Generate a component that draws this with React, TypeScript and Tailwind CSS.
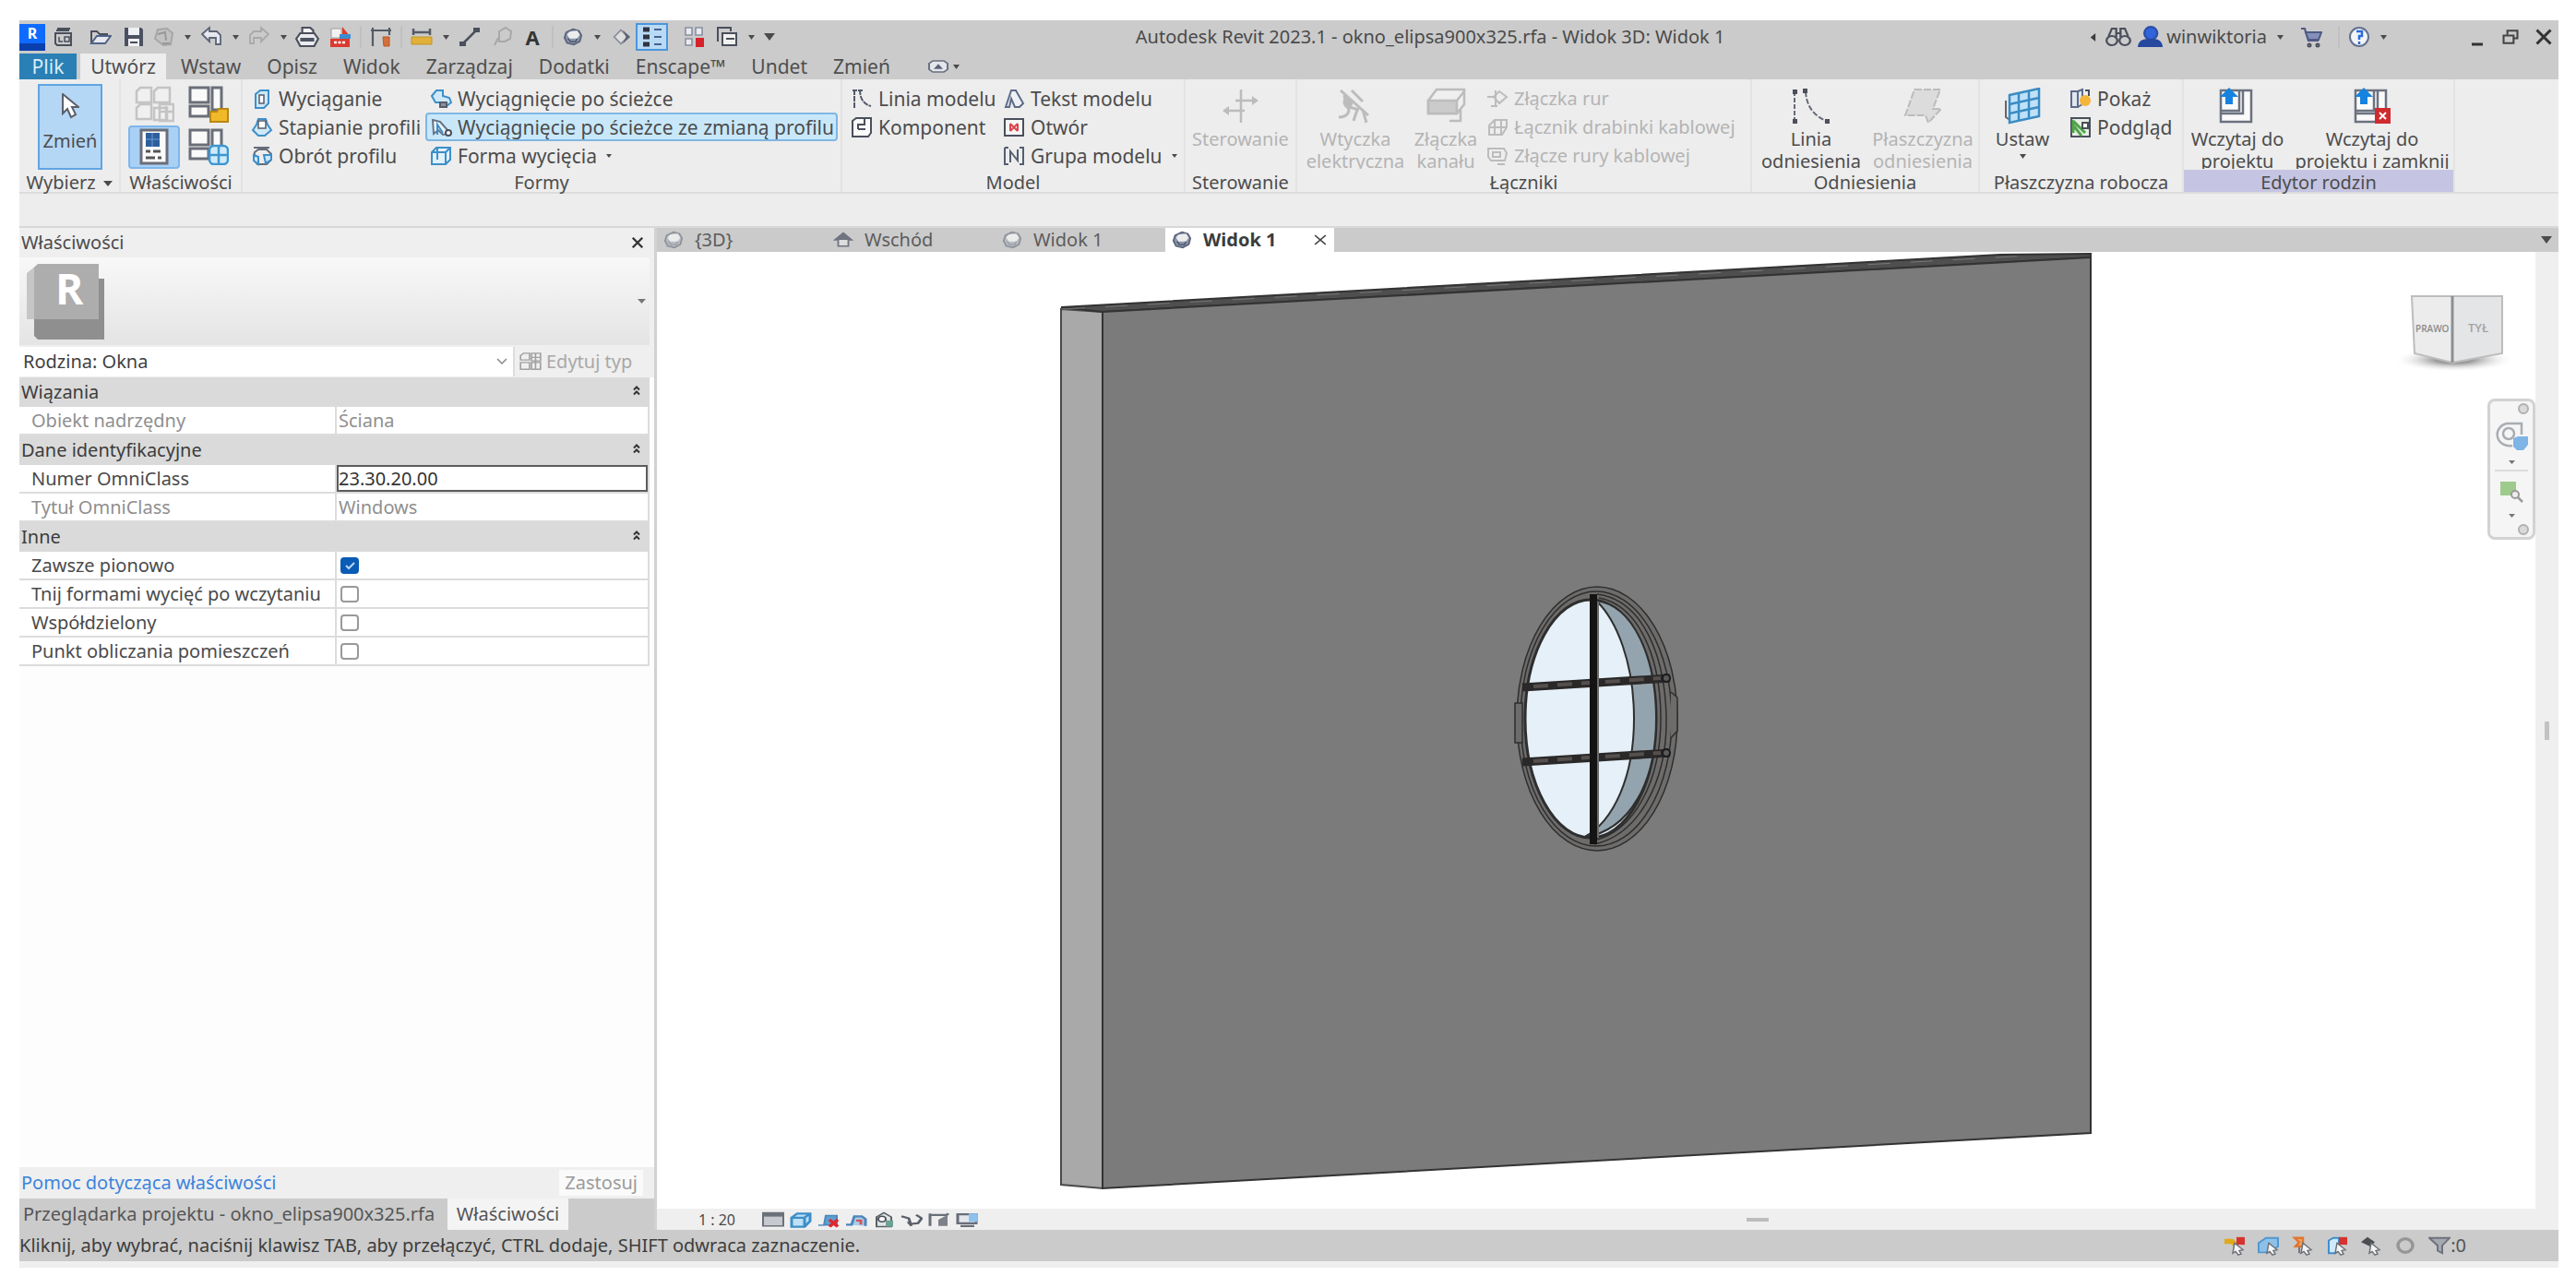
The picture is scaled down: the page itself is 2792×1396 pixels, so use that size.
import type { ReactNode } from "react";

type Kids = { children?: ReactNode };

function Ico({ children, size = "w-6 h-6" }: Kids & { size?: string }) {
  return (
    <svg viewBox="0 0 24 24" className={`${size} shrink-0`} fill="none" stroke="#4a4f5c" strokeWidth="2" preserveAspectRatio="none" aria-hidden="true">
      {children}
    </svg>
  );
}

function Caret({ className = "w-2 h-[5px]", color = "#4b4b4b" }: { className?: string; color?: string }) {
  return (
    <svg viewBox="0 0 10 6" className={`${className} shrink-0`} preserveAspectRatio="none" aria-hidden="true">
      <path d="M0 0h10L5 6z" fill={color} />
    </svg>
  );
}

/* ---------- title bar ---------- */

function QuickButton({ label, children, className = "" }: Kids & { label: string; className?: string }) {
  return (
    <button aria-label={label} className={`flex h-7 w-8 shrink-0 items-center justify-center ${className}`}>
      {children}
    </button>
  );
}

function DotButton({ label }: { label: string }) {
  return (
    <button aria-label={label} className="flex h-7 w-5 shrink-0 items-center justify-center">
      <Caret className="w-[7px] h-[5px]" />
    </button>
  );
}

function Separator() {
  return <div className="mx-[5px] h-6 w-[2px] bg-[#c0c0c0]" />;
}

function Sphere({ dim = false }: { dim?: boolean }) {
  return (
    <Ico size="w-[22px] h-5">
      <path d="M12 2l7 2 3 6-2 8-7 4-8-2-3-7 2-7z" fill={dim ? "#b9bcc2" : "#8b95ab"} stroke={dim ? "#8e929a" : "#5a647c"} />
      <path d="M8 5l9-1 3 5-3 5H8L5 9z" fill="#ececec" stroke="none" />
      <path d="M6 14l3 4h6l2-4" stroke={dim ? "#9a9da5" : "#4a5268"} strokeWidth="1.5" />
    </Ico>
  );
}

function TitleBar() {
  return (
    <header className="flex h-9 items-center bg-[#cbcbcb]">
      <button aria-label="Menu aplikacji" className="flex h-[29px] w-7 shrink-0 flex-col items-center border-b-8 border-[#0a3fae] bg-[#0f6bff] text-[16px] font-bold leading-5 text-white">
        R
      </button>
      <QuickButton label="Start" className="ml-1">
        <Ico>
          <path d="M4 5h14M5 3h14M3 8h17v13H5l-2-2z" />
          <path d="M7 12v5h4M13 12h5v5h-5z" strokeWidth="1.5" />
        </Ico>
      </QuickButton>
      <QuickButton label="Otwórz" className="ml-2">
        <Ico>
          <path d="M2 18V6h6l3 3h8v3" strokeWidth="2" />
          <path d="M2 19l6-8h15l-6 8z" fill="#e6e8ee" stroke="#4f6288" />
        </Ico>
      </QuickButton>
      <QuickButton label="Zapisz" className="ml-1">
        <Ico>
          <path d="M2 2h18l2 2v18H2z" fill="#4b5160" stroke="none" />
          <path d="M6 2h12v8H6zM6 14h12v8H6z" fill="#eef0f3" stroke="none" />
          <path d="M8 18h8" />
        </Ico>
      </QuickButton>
      <QuickButton label="Synchronizuj">
        <Ico>
          <path d="M6 4l10-1 6 5-2 12-8 1-9-7z" fill="#c2c2c2" stroke="#a6a6a6" />
          <path d="M6 9l8-2 1 9M11 19h8" stroke="#989898" />
        </Ico>
      </QuickButton>
      <DotButton label="Opcje synchronizacji" />
      <QuickButton label="Cofnij">
        <Ico>
          <path d="M2 9l8-7v4h8l4 4v10h-5v-7h-7v4z" fill="#e6e8ee" stroke="#5c6478" strokeWidth="1.8" />
        </Ico>
      </QuickButton>
      <DotButton label="Lista cofnięć" />
      <QuickButton label="Ponów">
        <Ico>
          <path d="M22 9l-8-7v4H6l-4 4v9h4v-6h8v4z" stroke="#a9a9a9" strokeWidth="1.8" />
        </Ico>
      </QuickButton>
      <DotButton label="Lista ponowień" />
      <QuickButton label="Drukuj">
        <Ico size="w-[26px] h-6">
          <path d="M7 9V2h8l3 3v4" fill="#f3f3f3" />
          <path d="M5 8h14l4 6-4 8H5l-4-8z" fill="#e9ebef" />
          <path d="M5 13h14v4H5z" fill="#4b5160" stroke="none" />
        </Ico>
      </QuickButton>
      <QuickButton label="Eksport PDF" className="ml-1">
        <Ico>
          <path d="M2 3h11v10H2z" fill="#f2f2f2" stroke="#9c9c9c" strokeWidth="1" />
          <path d="M14 1l8 10h-8z" fill="#e03a2c" stroke="none" />
          <path d="M11 9h12v5H11z" fill="#3b8ed0" stroke="none" />
          <path d="M1 14h21v9H1z" fill="#dc3a2d" stroke="none" />
          <path d="M5 18h12" stroke="#fff" strokeWidth="2.5" strokeDasharray="3 1.5" />
        </Ico>
      </QuickButton>
      <Separator />
      <QuickButton label="Wymiar wyrównany">
        <Ico>
          <path d="M3 2v20M3 5h18M21 2v8M1 5h5M18 5h5" stroke="#555b66" strokeWidth="2.2" />
          <path d="M14 12h7v10h-6z" fill="#d3703b" stroke="#b9572a" strokeWidth="1" />
        </Ico>
      </QuickButton>
      <Separator />
      <QuickButton label="Zmierz">
        <Ico>
          <path d="M1 12h22v8H1z" fill="#e0b03a" stroke="#c29526" strokeWidth="1" />
          <path d="M2 7h20M3 3v7M21 3v7" stroke="#555b66" strokeWidth="2.5" />
        </Ico>
      </QuickButton>
      <DotButton label="Opcje pomiaru" />
      <QuickButton label="Linia modelu">
        <Ico>
          <path d="M4 20L20 4" strokeWidth="2.5" />
          <path d="M1 17h7v5H1zM16 2h7v5h-7z" fill="#4a4f5c" stroke="none" />
        </Ico>
      </QuickButton>
      <QuickButton label="Etykieta" className="ml-1">
        <Ico>
          <path d="M3 21l4-8M8 6l7-4 6 4-1 8-6 3H8z" stroke="#a8a8a8" />
        </Ico>
      </QuickButton>
      <QuickButton label="Tekst">
        <span className="text-[22px] font-bold leading-7 text-[#353535]">A</span>
      </QuickButton>
      <Separator />
      <QuickButton label="Widok 3D">
        <Sphere />
      </QuickButton>
      <DotButton label="Opcje widoku 3D" />
      <QuickButton label="Przekrój">
        <Ico size="w-[22px] h-5">
          <path d="M12 3l8 9-8 9-8-9z" fill="#dedede" stroke="#8a8f9c" />
          <path d="M14 3l9 9-9 9 4-9z" fill="#5d6372" stroke="none" />
        </Ico>
      </QuickButton>
      <button aria-label="Cienkie linie" className="flex h-[30px] w-[35px] shrink-0 items-center justify-center border-2 border-[#4a96dc] bg-[#b9daf5]">
        <Ico>
          <path d="M2 4h7M2 12h7M2 20h7" stroke="#2f3440" strokeWidth="5" />
          <path d="M14 4h8M14 12h8M14 20h8" stroke="#45618c" strokeWidth="1.8" />
        </Ico>
      </button>
      <QuickButton label="Zamknij nieaktywne" className="ml-3">
        <Ico>
          <path d="M3 2h7v8H3zM3 14h7v7H3zM14 2h7v8h-7z" fill="#e9ebf0" stroke="#8a90a0" strokeWidth="1.6" />
          <path d="M14 13h9v10h-9z" fill="#d6222a" stroke="none" />
        </Ico>
      </QuickButton>
      <QuickButton label="Przełącz okna" className="ml-1">
        <Ico>
          <path d="M2 17V2h14v4" />
          <path d="M7 8h15v13H7z" fill="#f1f1f1" />
          <path d="M11 14h9" />
        </Ico>
      </QuickButton>
      <DotButton label="Lista okien" />
      <button aria-label="Dostosuj pasek" className="flex h-7 w-5 shrink-0 items-center justify-center">
        <Caret className="w-3 h-2" />
      </button>
      <h1 className="min-w-0 flex-1 whitespace-nowrap text-center text-[20px] text-[#4a4a4a]">Autodesk Revit 2023.1 - okno_elipsa900x325.rfa - Widok 3D: Widok 1</h1>
      <button aria-label="Zwiń wyszukiwanie" className="flex h-7 w-6 items-center justify-center">
        <svg viewBox="0 0 6 10" className="h-[9px] w-[7px]" aria-hidden="true"><path d="M6 0v10L0 5z" fill="#3c3c3c" /></svg>
      </button>
      <QuickButton label="Szukaj" className="mr-1">
        <Ico size="w-7 h-6">
          <circle cx="6" cy="16" r="5" /><circle cx="18" cy="16" r="5" />
          <path d="M3 11l3-8h4v9M21 11l-3-8h-4v9M10 8h4" />
        </Ico>
      </QuickButton>
      <button className="flex h-7 items-center gap-1 whitespace-nowrap text-[20px] text-[#4a4a4a]">
        <Ico size="w-7 h-6">
          <ellipse cx="13" cy="8" rx="6" ry="7" fill="#3164d8" stroke="#2b4da8" />
          <path d="M2 22c1-6 5-7 11-7s9 1 10 7z" fill="#26499f" stroke="#26499f" />
        </Ico>
        winwiktoria
      </button>
      <span className="ml-1 flex"><DotButton label="Opcje konta" /></span>
      <QuickButton label="Sklep" className="ml-2 mr-2">
        <Ico>
          <path d="M1 3h4l4 13h11" strokeWidth="2.2" stroke="#4f5a86" />
          <path d="M6 7h17l-3 8H9z" fill="#8490ba" stroke="#4f5a86" />
          <circle cx="10" cy="21" r="1.5" /><circle cx="19" cy="21" r="1.5" />
        </Ico>
      </QuickButton>
      <Separator />
      <QuickButton label="Pomoc">
        <Ico>
          <circle cx="12" cy="12" r="10" fill="#f2f4f8" stroke="#64718f" />
          <path d="M9 6h6v5h-3v4M12 17v3" stroke="#2a6be0" strokeWidth="2.5" />
        </Ico>
      </QuickButton>
      <DotButton label="Opcje pomocy" />
      <div className="ml-[76px] flex gap-1">
        <QuickButton label="Minimalizuj">
          <Ico size="w-3 h-6"><path d="M0 20h24" stroke="#333" strokeWidth="3" /></Ico>
        </QuickButton>
        <QuickButton label="Przywróć">
          <Ico size="w-5 h-[18px]">
            <path d="M8 9V3h13v11h-5" stroke="#444" strokeWidth="2.5" /><path d="M3 10h13v11H3z" stroke="#444" strokeWidth="2.5" />
          </Ico>
        </QuickButton>
        <QuickButton label="Zamknij">
          <Ico size="w-5 h-[18px]"><path d="M3 2l18 20M21 2L3 22" stroke="#333" strokeWidth="3.5" /></Ico>
        </QuickButton>
      </div>
    </header>
  );
}

const ribbonTabs = ["Wstaw", "Opisz", "Widok", "Zarządzaj", "Dodatki", "Enscape™", "Undet", "Zmień"];

function RibbonTabs() {
  return (
    <nav className="flex h-7 items-stretch bg-[#cbcbcb] text-[21px] leading-7 text-[#4f4f4f]">
      <button className="w-[62px] bg-[#2a80b4] text-[#d9ecf8]">Plik</button>
      <button className="ml-1 w-[93px] bg-[#ededed]">Utwórz</button>
      <div className="flex gap-7 pl-4">
        {ribbonTabs.map((t) => (
          <button key={t}>{t}</button>
        ))}
      </div>
      <button aria-label="Minimalizuj wstążkę" className="ml-10 flex items-center gap-1">
        <Ico size="w-6 h-4">
          <path d="M6 3h12l4 4v10l-4 4H6l-4-4V7z" fill="#e4e6ea" stroke="#687080" />
          <path d="M12 8l5 8H7z" fill="#5a6278" stroke="none" />
        </Ico>
        <Caret className="w-[7px] h-[5px]" />
      </button>
    </nav>
  );
}

/* ---------- ribbon ---------- */

function Group({ label, width, children, labelClass = "", trailing }: Kids & { label: string; width: string; labelClass?: string; trailing?: ReactNode }) {
  return (
    <section aria-label={label} className={`${width} flex shrink-0 flex-col border-r-2 border-[#e3e3e3]`}>
      <div className="flex h-[98px] pt-[5px]">{children}</div>
      <div className={`flex h-6 justify-center gap-2 whitespace-nowrap pt-1 leading-5 ${labelClass}`}>
        {label}
        {trailing}
      </div>
    </section>
  );
}

function Small({ icon, children, active = false, dim = false, caret = false }: Kids & { icon: ReactNode; active?: boolean; dim?: boolean; caret?: boolean }) {
  return (
    <button
      className={`flex h-[31px] items-center gap-[6px] whitespace-nowrap border-2 pl-[3px] pr-[2px] leading-[26px] ${
        active ? "rounded-sm border-[#7fb6e2] bg-[#c8e8fa]" : "border-transparent"
      } ${dim ? "text-[20px] text-[#b4b4b4]" : "text-[21px]"}`}
    >
      {icon}
      {children}
      {caret && <Caret className="ml-1 w-[6px] h-1" />}
    </button>
  );
}

function Big({ icon, lines, width, dim = false, caret = false }: { icon: ReactNode; lines: string[]; width: string; dim?: boolean; caret?: boolean }) {
  return (
    <button className={`${width} flex h-[92px] shrink-0 flex-col items-center overflow-hidden whitespace-nowrap pt-1 ${dim ? "text-[#b4b4b4]" : ""}`}>
      <span className="mb-1 flex h-10 items-center">{icon}</span>
      {lines.map((l) => (
        <span key={l} className="block h-6 shrink-0 leading-6">{l}</span>
      ))}
      {caret && <Caret className="mt-1 w-[7px] h-[5px]" />}
    </button>
  );
}

const blue = "#3d8fc9";
const dimStroke = "#bcbcbc";

function DimConnector({ kind }: { kind: number }) {
  return (
    <Ico>
      {kind === 0 && <path d="M1 10h7M8 10l6-6 8 6-8 7zM10 3v17M5 20h7" stroke={dimStroke} />}
      {kind === 1 && <path d="M3 10l6-6h13v8l-5 8H3zM9 4v15M16 4v16M3 12h18" stroke={dimStroke} />}
      {kind === 2 && <path d="M2 4h17l3 5-2 8H5l-3-4zM7 8h8v5H7zM12 21h8" stroke={dimStroke} />}
    </Ico>
  );
}

function LoadIcon({ close = false }: { close?: boolean }) {
  return (
    <svg viewBox="0 0 44 40" className="h-10 w-11" fill="none" aria-hidden="true">
      <path d="M4 3h33v34H4z" fill="#fafafa" stroke="#6b7280" strokeWidth="2.5" />
      <path d="M4 25h20V3M4 28h24V3" stroke="#6b7280" strokeWidth="2.5" />
      <path d="M13 0l10 10h-6v8H9v-8H3z" fill="#1683e0" />
      {close && (
        <>
          <path d="M25 22h17v17H25z" fill="#cf2b2f" />
          <path d="M30 27l7 7M37 27l-7 7" stroke="#fff" strokeWidth="2" />
        </>
      )}
    </svg>
  );
}

function WindowTiles({ badge }: { badge: "folder" | "grid" }) {
  return (
    <svg viewBox="0 0 44 40" className="h-10 w-11" fill="none" aria-hidden="true">
      <path d="M2 2h20v16H2zM2 22h20v11H2zM26 2h10v24H26z" fill="#fafafa" stroke="#6a6e78" strokeWidth="3" />
      {badge === "folder" ? (
        <path d="M24 28h7l2-3h10v14H24z" fill="#f0b929" stroke="#b98814" strokeWidth="2" />
      ) : (
        <>
          <rect x="23" y="19" width="20" height="20" rx="5" fill="#cfeafa" stroke="#3d96d0" strokeWidth="2.5" />
          <path d="M33 20v18M24 29h18" stroke="#3d96d0" strokeWidth="2.5" />
        </>
      )}
    </svg>
  );
}

function Ribbon() {
  return (
    <div className="flex h-[124px] border-b-2 border-[#dcdcdc] bg-[#ededed] text-[20px] text-[#4c4c4c]">
      <Group label="Wybierz" width="w-[110px]" trailing={<Caret className="mt-2 w-[10px] h-[6px]" />}>
        <button className="ml-5 flex h-[93px] w-[70px] flex-col items-center gap-3 border-2 border-[#5fa5e3] bg-[#b5d7f6] pt-2 leading-6">
          <svg viewBox="0 0 20 28" className="h-7 w-5 shrink-0" aria-hidden="true">
            <path d="M2 1v21l5-5 4 9 5-3-4-8h7z" fill="#fff" stroke="#5b5f68" strokeWidth="2" />
          </svg>
          Zmień
        </button>
      </Group>
      <Group label="Właściwości" width="w-[132px]">
        <div className="grid w-full grid-cols-2 grid-rows-[44px_48px] place-items-center gap-x-1 pl-2 pr-2">
          <button aria-label="Typy rodziny">
            <svg viewBox="0 0 44 40" className="h-10 w-11" fill="none" stroke="#c4c4c4" strokeWidth="2.5" aria-hidden="true">
              <path d="M3 6l4-4h12v16H3zM22 6l4-4h13v16H22zM3 24l4-4h12v16H3zM22 24h14v13H22z" fill="#f0f0f0" />
              <path d="M28 20h15v18H28zM28 28h15M35 22v15" />
            </svg>
          </button>
          <button aria-label="Kategoria i parametry rodziny"><WindowTiles badge="folder" /></button>
          <button aria-label="Właściwości" className="flex h-[47px] w-14 items-center justify-center rounded border-2 border-[#7fb6ea] bg-[#a9d0f5]">
            <svg viewBox="0 0 32 40" className="h-10 w-8" fill="none" aria-hidden="true">
              <rect x="2" y="2" width="28" height="36" fill="#fafafa" stroke="#6a6e78" strokeWidth="3" />
              <path d="M7 5h15v15H7z" fill="#2d5f9e" />
              <path d="M14 5v15M7 12h15" stroke="#6f9bd0" />
              <path d="M7 25h5M15 25h8M7 32h10M20 32h4" stroke="#555" strokeWidth="3" />
            </svg>
          </button>
          <button aria-label="Typy"><WindowTiles badge="grid" /></button>
        </div>
      </Group>
      <Group label="Formy" width="w-[650px]">
        <div className="flex w-[190px] shrink-0 flex-col items-start pl-1">
          <Small icon={<Ico><path d="M5 7l5-4h9v14l-5 5H5z" fill="#cfe8f8" stroke={blue} /><path d="M9 8h5v9H9z" fill="#fff" stroke="#555d6c" strokeWidth="1.5" /></Ico>}>Wyciąganie</Small>
          <Small icon={<Ico><path d="M8 3h8l2 6 4 6-7 6H8l-6-6 4-6z" fill="#cfe8f8" stroke={blue} /><path d="M8 5h8v8H8z" fill="#fff" stroke="#555d6c" strokeWidth="1.5" /></Ico>}>Stapianie profili</Small>
          <Small icon={<Ico><path d="M3 3h17M4 8l4-3h9l5 5v6l-5 5H7l-4-5z" stroke="#666d7a" /><path d="M3 11l5 2v8l-5-4zM14 11h8v5l-6 4z" fill="#cfe8f8" stroke={blue} /></Ico>}>Obrót profilu</Small>
        </div>
        <div className="flex flex-col items-start pl-2">
          <Small icon={<Ico><path d="M2 9l5-6h7v6l7 2 2 5-5 4-7-4H6z" fill="#cfe8f8" stroke={blue} /><path d="M11 16h7v5h-7z" fill="#8a92a0" stroke="#555d6c" /></Ico>}>Wyciągnięcie po ścieżce</Small>
          <Small active icon={<Ico><path d="M3 4l8 2 8 9v4l-5 1-5-5-5 4z" fill="#e9f6fd" stroke="#6a7586" /><path d="M8 20V9l6 9" stroke={blue} /><circle cx="20" cy="18" r="3" fill="#fff" /></Ico>}>Wyciągnięcie po ścieżce ze zmianą profilu</Small>
          <Small caret icon={<Ico><path d="M2 8l5-5h15v13l-5 5H2z" fill="#dff1fb" stroke={blue} /><path d="M2 8h15v13M17 8l5-5M8 3v13" stroke={blue} /></Ico>}>Forma wycięcia</Small>
        </div>
      </Group>
      <Group label="Model" width="w-[372px]">
        <div className="flex w-[165px] shrink-0 flex-col items-start pl-1">
          <Small icon={<Ico><path d="M4 2v20M10 2c0 10 4 16 12 18M2 3h5M8 3h5" stroke="#525a6a" strokeDasharray="6 1" /></Ico>}>Linia modelu</Small>
          <Small icon={<Ico><path d="M2 5l4-3h16v16l-3 4H2z" fill="#fafafa" /><path d="M8 14V9h7V2M8 14h8" /></Ico>}>Komponent</Small>
        </div>
        <div className="flex flex-col items-start pl-1">
          <Small icon={<Ico><path d="M3 21L9 3h5l8 14-4 4h-5L9 12l-2 9z" fill="#eef0f4" stroke="#5d6b88" /></Ico>}>Tekst modelu</Small>
          <Small icon={<Ico><path d="M2 3h20v18H2z" fill="#f6f6f6" /><path d="M8 8l8 8M16 8l-8 8M8 8v8M16 8v8" stroke="#d9464b" /></Ico>}>Otwór</Small>
          <Small caret icon={<Ico><path d="M2 3h4M2 3v18h4M18 3h4v18h-4M8 19V7l8 10V5" stroke="#555d70" /></Ico>}>Grupa modelu</Small>
        </div>
      </Group>
      <Group label="Sterowanie" width="w-[121px]">
        <Big dim width="w-full" lines={["Sterowanie"]} icon={<svg viewBox="0 0 40 40" className="h-10 w-10" fill="none" stroke={dimStroke} strokeWidth="2.5" aria-hidden="true"><path d="M20 2v36M14 14h20M4 25h20" /><path d="M32 9l7 5-7 5zM7 20l-7 5 7 5z" fill={dimStroke} stroke="none" /></svg>} />
      </Group>
      <Group label="Łączniki" width="w-[493px]">
        <Big dim width="w-[126px]" lines={["Wtyczka", "elektryczna"]} icon={<svg viewBox="0 0 44 40" className="h-10 w-11" fill="none" stroke={dimStroke} strokeWidth="3" aria-hidden="true"><path d="M6 3l30 27M18 3l12 12M10 8l2 12 14 4M12 20c6 4 2 12-8 12M24 24l-4 12M30 24l4 14" /><circle cx="14" cy="16" r="4" fill={dimStroke} /></svg>} />
        <Big dim width="w-[70px]" lines={["Złączka", "kanału"]} icon={<svg viewBox="0 0 44 40" className="h-10 w-11" fill="none" stroke={dimStroke} strokeWidth="2.5" aria-hidden="true"><path d="M3 14L12 2h30v16L34 28H3z" fill="#efefef" /><path d="M3 14h31v14H3z" fill="#cbcbcb" /><path d="M34 14l8-10M38 24v12H26" /></svg>} />
        <div className="flex flex-col items-start pl-1">
          <Small dim icon={<DimConnector kind={0} />}>Złączka rur</Small>
          <Small dim icon={<DimConnector kind={1} />}>Łącznik drabinki kablowej</Small>
          <Small dim icon={<DimConnector kind={2} />}>Złącze rury kablowej</Small>
        </div>
      </Group>
      <Group label="Odniesienia" width="w-[247px]">
        <Big width="w-[128px]" lines={["Linia", "odniesienia"]} icon={<svg viewBox="0 0 44 40" className="h-10 w-11" fill="none" stroke="#666b75" strokeWidth="2" aria-hidden="true"><path d="M4 4v32" strokeDasharray="5 2" /><path d="M16 4c1 16 8 26 24 33" strokeDasharray="6 2" /><path d="M2 2h5v5H2zM2 34h5v5H2zM13 1h5v5h-5zM37 34h5v5h-5z" fill="#4c505a" stroke="none" /></svg>} />
        <Big dim width="w-[114px]" lines={["Płaszczyzna", "odniesienia"]} icon={<svg viewBox="0 0 44 40" className="h-10 w-11" fill="none" stroke={dimStroke} strokeWidth="2" aria-hidden="true"><path d="M13 2h28l-8 21 9 0-14 15-3-8H3z" fill="#dcdcdc" strokeDasharray="8 2" /></svg>} />
      </Group>
      <Group label="Płaszczyzna robocza" width="w-[221px]">
        <Big caret width="w-[92px]" lines={["Ustaw"]} icon={<svg viewBox="0 0 40 40" className="h-10 w-10" fill="none" aria-hidden="true"><path d="M2 14v18l6 4" stroke="#666" strokeWidth="2" /><path d="M6 8l32-7v30L6 38z" fill="#bfe2f8" stroke="#3a8cc4" strokeWidth="2.5" /><path d="M16 6v30M27 4v30M6 18l32-7M6 28l32-7" stroke="#3a8cc4" strokeWidth="2.5" /></svg>} />
        <div className="flex flex-col items-start">
          <Small icon={<Ico><path d="M2 4h7v17H2zM9 4l5-2v16l-5 3" fill="#dfe7f0" stroke="#5d6b88" /><path d="M17 3h4v6" /><circle cx="17" cy="14" r="6" fill="#f4b53a" stroke="none" /></Ico>}>Pokaż</Small>
          <Small icon={<Ico><path d="M2 2h20v20H2z" fill="#e9efe6" /><path d="M4 5l13 13M5 11l8 10M4 18V6l9 8" stroke="#4fa548" strokeWidth="3" /><path d="M14 7h6v6h-6z" fill="#fff" /></Ico>}>Podgląd</Small>
        </div>
      </Group>
      <Group label="Edytor rodzin" width="w-[294px]" labelClass="bg-[#c5c5e3]">
        <Big width="w-[116px]" lines={["Wczytaj do", "projektu"]} icon={<LoadIcon />} />
        <Big width="w-[176px]" lines={["Wczytaj do", "projektu i zamknij"]} icon={<LoadIcon close />} />
      </Group>
    </div>
  );
}

/* ---------- properties palette ---------- */

function GroupRow({ children }: Kids) {
  return (
    <tr className="h-8 bg-[#dadada]">
      <th colSpan={2} scope="colgroup" className="p-0 text-left font-normal">
        <button className="flex w-full items-center justify-between pl-[2px] pr-[10px] text-[#3c3c3c]">
          {children}
          <svg viewBox="0 0 8 10" className="-mt-1 h-[11px] w-2" fill="none" stroke="#333" strokeWidth="2" aria-hidden="true">
            <path d="M1 4l3-3 3 3M1 9l3-3 3 3" />
          </svg>
        </button>
      </th>
    </tr>
  );
}

function PropRow({ id, name, dim = false, children }: Kids & { id: string; name: string; dim?: boolean }) {
  return (
    <tr className={`h-[31px] ${dim ? "text-[#8f8f8f]" : "text-[#4a4a4a]"}`}>
      <th scope="row" className="whitespace-nowrap border-b-2 border-r-2 border-[#dcdcdc] py-0 pl-[13px] pr-0 text-left font-normal">
        <label htmlFor={id}>{name}</label>
      </th>
      <td className="border-b-2 border-r-2 border-[#dcdcdc] p-0">{children}</td>
    </tr>
  );
}

function Check({ id, checked = false }: { id: string; checked?: boolean }) {
  return (
    <span className="relative ml-1 flex w-5 items-center">
      <input id={id} type="checkbox" defaultChecked={checked} className="peer h-[18px] w-5 appearance-none rounded border-2 border-[#999] bg-white checked:border-[#0a5bb5] checked:bg-[#0a5bb5]" />
      <svg viewBox="0 0 20 18" className="pointer-events-none absolute inset-0 hidden h-[18px] w-5 peer-checked:block" fill="none" aria-hidden="true">
        <path d="M6 9l3 3 6-6" stroke="#b9d6f2" strokeWidth="2" />
      </svg>
    </span>
  );
}

function Properties() {
  return (
    <aside className="flex w-[691px] shrink-0 flex-col border-r-[3px] border-[#d2d2d2] bg-[#efefef] text-[20px]">
      <div className="flex h-8 items-center justify-between pl-[2px] pr-[11px] text-[#4c4c4c]">
        <h2>Właściwości</h2>
        <button aria-label="Zamknij paletę">
          <Ico size="w-[14px] h-[14px]"><path d="M3 3l18 18M21 3L3 21" stroke="#333" strokeWidth="4" /></Ico>
        </button>
      </div>
      <button aria-label="Selektor typu" className="mr-[5px] flex h-[95px] items-center justify-between bg-gradient-to-b from-[#f8f8f8] to-[#e4e4e4] pl-2 pr-1">
        <svg viewBox="0 0 88 86" className="h-[86px] w-[88px]" aria-hidden="true">
          <path d="M0 12L10 4v58H0z" fill="#c6c6c6" />
          <path d="M8 60h70V18h6v66H12l-4-4z" fill="#8f8f8f" />
          <path d="M12 2h66v60H8V6z" fill="#adadad" />
          <text x="31" y="46" fontFamily="Open Sans" fontWeight="700" fontSize="46" fill="#fff">R</text>
        </svg>
        <Caret className="w-[9px] h-[5px]" color="#777" />
      </button>
      <div className="mr-[5px] flex h-[35px] items-center gap-1">
        <div className="relative w-[537px] shrink-0">
          <select aria-label="Filtr właściwości" className="block h-8 w-full appearance-none border-r-2 border-[#dcdcdc] bg-white pl-1 text-[#3f3f3f]">
            <option>Rodzina: Okna</option>
          </select>
          <svg viewBox="0 0 12 8" className="pointer-events-none absolute right-2 top-3 h-2 w-3" fill="none" aria-hidden="true"><path d="M1 1l5 5 5-5" stroke="#888" strokeWidth="1.5" /></svg>
        </div>
        <button className="flex items-center gap-1 whitespace-nowrap text-[#a8a8a8]">
          <Ico size="w-[26px] h-[22px]"><path d="M2 5l3-3h6v8H2zM13 2h9v9h-9zM2 13h9v8H2zM13 13h9v8h-9zM17 2v19M13 7h9" stroke="#a0a0a0" strokeWidth="1.5" /></Ico>
          Edytuj typ
        </button>
      </div>
      <div className="flex-1 bg-[#fdfdfd] pr-[5px]">
        <table className="w-full table-fixed border-separate border-spacing-0 bg-white leading-6">
          <colgroup>
            <col className="w-[344px]" />
            <col />
          </colgroup>
          <tbody>
            <GroupRow>Wiązania</GroupRow>
            <PropRow id="host" name="Obiekt nadrzędny" dim>
              <input id="host" readOnly value="Ściana" className="block h-6 w-full bg-transparent pl-[2px]" />
            </PropRow>
            <GroupRow>Dane identyfikacyjne</GroupRow>
            <PropRow id="omni" name="Numer OmniClass">
              <input id="omni" defaultValue="23.30.20.00" className="block h-[29px] w-full border-2 border-[#5c5c5c] bg-transparent text-[#333]" />
            </PropRow>
            <PropRow id="omnititle" name="Tytuł OmniClass" dim>
              <input id="omnititle" readOnly value="Windows" className="block h-6 w-full bg-transparent pl-[2px]" />
            </PropRow>
            <GroupRow>Inne</GroupRow>
            <PropRow id="vert" name="Zawsze pionowo"><Check id="vert" checked /></PropRow>
            <PropRow id="cut" name="Tnij formami wycięć po wczytaniu"><Check id="cut" /></PropRow>
            <PropRow id="shared" name="Współdzielony"><Check id="shared" /></PropRow>
            <PropRow id="room" name="Punkt obliczania pomieszczeń"><Check id="room" /></PropRow>
          </tbody>
        </table>
      </div>
      <div className="flex h-[34px] items-center justify-between pl-[2px] pr-3">
        <a href="#pomoc" className="text-[#3a84dc]">Pomoc dotycząca właściwości</a>
        <button className="h-7 bg-[#fafafa] px-[6px] leading-7 text-[#9b9b9b]">Zastosuj</button>
      </div>
      <div className="flex h-[34px] bg-[#cbcbcb] text-[#565656]">
        <button className="w-[464px] whitespace-nowrap pl-1 text-left">Przeglądarka projektu - okno_elipsa900x325.rfa</button>
        <button className="w-[131px] bg-[#f4f4f4]">Właściwości</button>
      </div>
    </aside>
  );
}

/* ---------- view area ---------- */

function HomeIcon() {
  return (
    <Ico size="w-[22px] h-[18px]">
      <path d="M12 2l10 10h-4v9H6v-9H2z" fill="#dcdcdc" stroke="#6f7480" />
      <path d="M12 2l10 10H2z" fill="#6f7480" stroke="none" />
    </Ico>
  );
}

function ViewTabs() {
  return (
    <div className="flex h-[26px] items-stretch bg-[#cbcbcb] text-[20px] leading-[26px] text-[#5c5c5c]">
      <button className="flex w-[184px] items-center gap-3 pl-[7px]"><Sphere dim />{"{3D}"}</button>
      <button className="flex w-[183px] items-center gap-3 pl-[7px]"><HomeIcon />Wschód</button>
      <button className="flex w-[184px] items-center gap-3 pl-[7px]"><Sphere dim />Widok 1</button>
      <div className="flex w-[183px] items-center justify-between bg-white pl-[7px] pr-2">
        <button className="flex items-center gap-3 whitespace-nowrap font-bold text-[#3c3c3c]"><Sphere />Widok 1</button>
        <button aria-label="Zamknij widok">
          <Ico size="w-[14px] h-3"><path d="M2 2l20 20M22 2L2 22" stroke="#444" strokeWidth="3" /></Ico>
        </button>
      </div>
      <button aria-label="Lista widoków" className="ml-auto flex w-[26px] items-center justify-center"><Caret className="w-3 h-2" /></button>
    </div>
  );
}

function Scene() {
  return (
    <svg viewBox="712 273 2036 1037" className="block h-auto w-full" fill="none" role="img" aria-label="Model ściany z owalnym oknem">
      <path d="M1150 335L1195 338V1288L1150 1284z" fill="#a9a9a9" stroke="#4a4a4a" strokeWidth="2" />
      <path d="M1150 333L2168 276L2266 275V279L1195 338z" fill="#4f4f4f" stroke="#333" strokeWidth="2" />
      <path d="M1195 338L2266 279V1228L1195 1288z" fill="#7b7b7b" stroke="#333" strokeWidth="2" />
      <path d="M1152 335L2200 277" stroke="#767676" strokeWidth="1" strokeDasharray="24 22" />
      <g stroke="#2e2e2e">
        <ellipse cx="1731" cy="779" rx="87" ry="143" fill="#6e6c6b" strokeWidth="1.5" />
        <ellipse cx="1730" cy="779" rx="82" ry="138" strokeWidth="1.5" />
        <path d="M1731 644C1780 650 1805 710 1806 779S1775 905 1728 915" strokeWidth="1.5" />
        <path d="M1733 648C1776 656 1800 712 1800 779S1772 900 1728 911" strokeWidth="1.5" />
        <rect x="1642" y="762" width="8" height="43" fill="#6e6c6b" strokeWidth="1.5" />
        <path d="M1811 750l7 6v36l-7 8" fill="#6e6c6b" strokeWidth="1.5" />
        <ellipse cx="1724" cy="779" rx="71" ry="129" fill="#e5f0f8" strokeWidth="3" />
        <path d="M1730 651C1770 656 1795 712 1795 779S1768 900 1716 908C1750 890 1771 840 1771 779S1752 672 1730 651z" fill="#94a4ae" strokeWidth="2" />
      </g>
      <path d="M1650 745L1810 735M1650 826L1810 816" stroke="#2a2828" strokeWidth="9" />
      <path d="M1662 744L1800 735M1662 825L1800 816" stroke="#55504e" strokeWidth="4" strokeDasharray="16 10" />
      <path d="M1727 644V915" stroke="#141414" strokeWidth="8" />
      <path d="M1732 652V908" stroke="#6b6b6b" strokeWidth="2" />
      <circle cx="1806" cy="735" r="4" fill="#5a5a5a" stroke="#1b1b1b" strokeWidth="2" />
      <circle cx="1806" cy="816" r="4" fill="#5a5a5a" stroke="#1b1b1b" strokeWidth="2" />
    </svg>
  );
}

function ViewCube() {
  return (
    <svg viewBox="0 0 136 90" className="h-[90px] w-[136px]" aria-label="ViewCube" role="img">
      <defs>
        <radialGradient id="cubeShadow"><stop offset="0.3" stopColor="#9a9a9a" /><stop offset="1" stopColor="#fff" stopOpacity="0" /></radialGradient>
      </defs>
      <ellipse cx="66" cy="71" rx="66" ry="13" fill="url(#cubeShadow)" />
      <path d="M20 2h44v72L23 64z" fill="#ececec" stroke="#bdbdbd" strokeWidth="2" />
      <path d="M64 2h54v62L64 74z" fill="#e4e5e7" stroke="#bdbdbd" strokeWidth="2" />
      <path d="M64 2v72" stroke="#8f8f8f" strokeWidth="3" />
      <text x="24" y="41" fontFamily="Open Sans" fontSize="10" fontWeight="600" fill="#8b8b8b">PRAWO</text>
      <text x="81" y="41" fontFamily="Open Sans" fontSize="13" fontWeight="600" fill="#a3a3a3">TYŁ</text>
    </svg>
  );
}

function NavigationBar() {
  return (
    <div className="flex h-[153px] w-[52px] flex-col items-center rounded-lg border-[3px] border-[#d2d2d2] bg-[#f5f5f5] py-[2px]">
      <div className="mr-1 h-3 w-3 self-end rounded-full border-2 border-[#b0b0b0] bg-[#dadada]" />
      <button aria-label="Koło nawigacji" className="mt-2 flex flex-col items-center gap-[10px]">
        <svg viewBox="0 0 38 32" className="h-8 w-[38px]" fill="none" aria-hidden="true">
          <path d="M30 14V2H14a13 12 0 1 0 6 24" stroke="#a9adb3" strokeWidth="2.5" />
          <circle cx="16" cy="13" r="6" stroke="#a9adb3" strokeWidth="2.5" />
          <path d="M21 18l5-2h11v9l-5 6h-7l-4-4z" fill="#7fb4e6" />
        </svg>
        <Caret className="w-[7px] h-1" color="#777" />
      </button>
      <div className="my-[6px] h-[2px] w-9 bg-[#dcdcdc]" />
      <button aria-label="Powiększenie" className="mt-1 flex flex-col items-center gap-3">
        <svg viewBox="0 0 26 24" className="h-6 w-[26px]" fill="none" aria-hidden="true">
          <path d="M1 1h17v15H1z" fill="#9ecb8c" />
          <circle cx="17" cy="15" r="4" fill="#eee" stroke="#9a9a9a" strokeWidth="2" />
          <path d="M20 18l5 5" stroke="#9a9a9a" strokeWidth="2.5" />
        </svg>
        <Caret className="w-[7px] h-1" color="#777" />
      </button>
      <div className="mr-1 mt-auto h-3 w-3 self-end rounded-full border-2 border-[#b0b0b0] bg-[#dadada]" />
    </div>
  );
}

const viewControls: { label: string; icon: ReactNode }[] = [
  { label: "Poziom szczegółów", icon: <><path d="M1 2h22v19H1z" fill="#c6cace" stroke="#6c7078" /><path d="M1 5h22" stroke="#6c7078" strokeWidth="5" /></> },
  { label: "Styl wizualny", icon: <path d="M2 9l6-6h14v11l-6 8H2zM2 9h14v12M16 9l6-6" fill="#bfe0f5" stroke={blue} strokeWidth="3" /> },
  { label: "Ścieżka słońca", icon: <><path d="M1 20h6l2-14h12v13z" fill="#5f9fd0" stroke="#4b86bb" /><path d="M13 12l9 10M22 12l-9 10" stroke="#e0262d" strokeWidth="4" /></> },
  { label: "Cienie", icon: <><path d="M1 19h6l3-12h8l4 4v10" fill="#a8cdea" stroke="#4b86bb" strokeWidth="3" /><path d="M12 13h5v6" stroke="#d0565a" strokeWidth="3" /></> },
  { label: "Renderowanie", icon: <><path d="M4 8l8-6 8 6v14H4z" fill="#dfe6e3" stroke="#5a5f66" /><path d="M14 13h8v9h-8z" fill="#6ea393" stroke="none" /><circle cx="10" cy="11" r="4" fill="#fff" /></> },
  { label: "Kadrowanie", icon: <path d="M1 7l8 3 2 8 8-1 4-7-6-5M8 15l4 6" stroke="#5a5f6a" strokeWidth="3" /> },
  { label: "Region kadrowania", icon: <><path d="M2 3v18M2 5h18l2-2" stroke="#6a6e77" strokeWidth="3" /><path d="M11 12l10-7v16H11z" fill="#7e8189" stroke="none" /></> },
  { label: "Ukryj tymczasowo", icon: <><path d="M2 4h20v13H2zM5 21h15" fill="#e2e6ec" stroke="#686d78" strokeWidth="3" /><path d="M14 3h9v12h-9z" fill="#8fc1ee" stroke="none" /></> },
];

function ViewArea() {
  return (
    <main className="flex min-w-0 flex-1 flex-col">
      <ViewTabs />
      <div className="flex flex-1">
        <div className="relative min-w-0 flex-1 bg-white">
          <Scene />
          <div className="absolute right-[18px] top-[46px]"><ViewCube /></div>
          <div className="absolute right-0 top-[159px]"><NavigationBar /></div>
        </div>
        <div className="flex w-[25px] items-center justify-center bg-[#efefef]">
          <div className="h-5 w-[5px] bg-[#c2c2c2]" />
        </div>
      </div>
      <div className="flex h-[23px] items-center bg-[#efefef] text-[#4a4a4a]">
        <button className="ml-10 mr-6 w-[50px] whitespace-nowrap text-[16px] leading-5">1 : 20</button>
        <div className="flex gap-[6px]">
          {viewControls.map((c) => (
            <button key={c.label} aria-label={c.label}><Ico size="w-6 h-[18px]">{c.icon}</Ico></button>
          ))}
        </div>
        <div className="ml-auto mr-[856px] h-1 w-6 bg-[#bdbdbd]" />
      </div>
    </main>
  );
}

/* ---------- status bar ---------- */

const pointer = <path d="M12 9l9 8-4 1 2 4-3 1-3-4-3 2z" fill="#f4f4f4" stroke="#6b6f76" strokeWidth="1.5" />;

const statusTools: { label: string; icon: ReactNode }[] = [
  { label: "Wybierz połączenia", icon: <><path d="M1 7h8l4 4" stroke="#e0a91e" strokeWidth="6" /><path d="M14 2h9v9h-9z" fill="#d6332f" stroke="none" />{pointer}</> },
  { label: "Wybierz podkład", icon: <><path d="M1 20V9l8-6h13v10L12 20z" fill="#8dc1ea" stroke="#5397ce" />{pointer}</> },
  { label: "Wybierz przypięte", icon: <><path d="M3 3h9v10H4l4-5z" fill="#f3a565" stroke="#e0772e" strokeWidth="2.5" /><path d="M8 14v7" stroke="#777" />{pointer}</> },
  { label: "Wybierz według powierzchni", icon: <><path d="M3 6l5-3h6v15l-4 3H3z" fill="#cfeafa" stroke="#3d8fd0" /><path d="M14 2h9v9h-9z" fill="#d6332f" stroke="none" />{pointer}</> },
  { label: "Przeciągaj przy wyborze", icon: <><path d="M1 8l7-6 8 6-5 5z" fill="#4b4d52" stroke="none" />{pointer}</> },
  { label: "Procesy w tle", icon: <circle cx="12" cy="12" r="8" stroke="#969696" strokeWidth="3.5" /> },
];

function StatusBar() {
  return (
    <footer className="border-b-[7px] border-[#efefef]">
      <div className="flex h-[34px] items-center bg-[#cbcbcb] text-[20px] text-[#3d3d3d]">
        <p className="flex-1 whitespace-nowrap">Kliknij, aby wybrać, naciśnij klawisz TAB, aby przełączyć, CTRL dodaje, SHIFT odwraca zaznaczenie.</p>
        <div className="flex items-center gap-[13px]">
          {statusTools.map((t) => (
            <button key={t.label} aria-label={t.label}><Ico size="w-6 h-[22px]">{t.icon}</Ico></button>
          ))}
          <button className="mr-[100px] flex items-center text-[#555]">
            <Ico size="w-6 h-[22px]"><path d="M1 3h22l-8 9v9l-5-3v-6z" fill="#a5a9b2" stroke="#6d727c" /></Ico>
            :0
          </button>
        </div>
      </div>
    </footer>
  );
}

export default function App() {
  return (
    <div className="min-h-screen w-full bg-white pb-[22px] pl-[21px] pr-[19px] pt-[22px] font-['Noto_Sans','Open_Sans',sans-serif]">
      <TitleBar />
      <RibbonTabs />
      <Ribbon />
      <div className="h-[37px] border-b-2 border-[#d8d8d8] bg-[#ededed]" />
      <div className="flex">
        <Properties />
        <ViewArea />
      </div>
      <StatusBar />
    </div>
  );
}
